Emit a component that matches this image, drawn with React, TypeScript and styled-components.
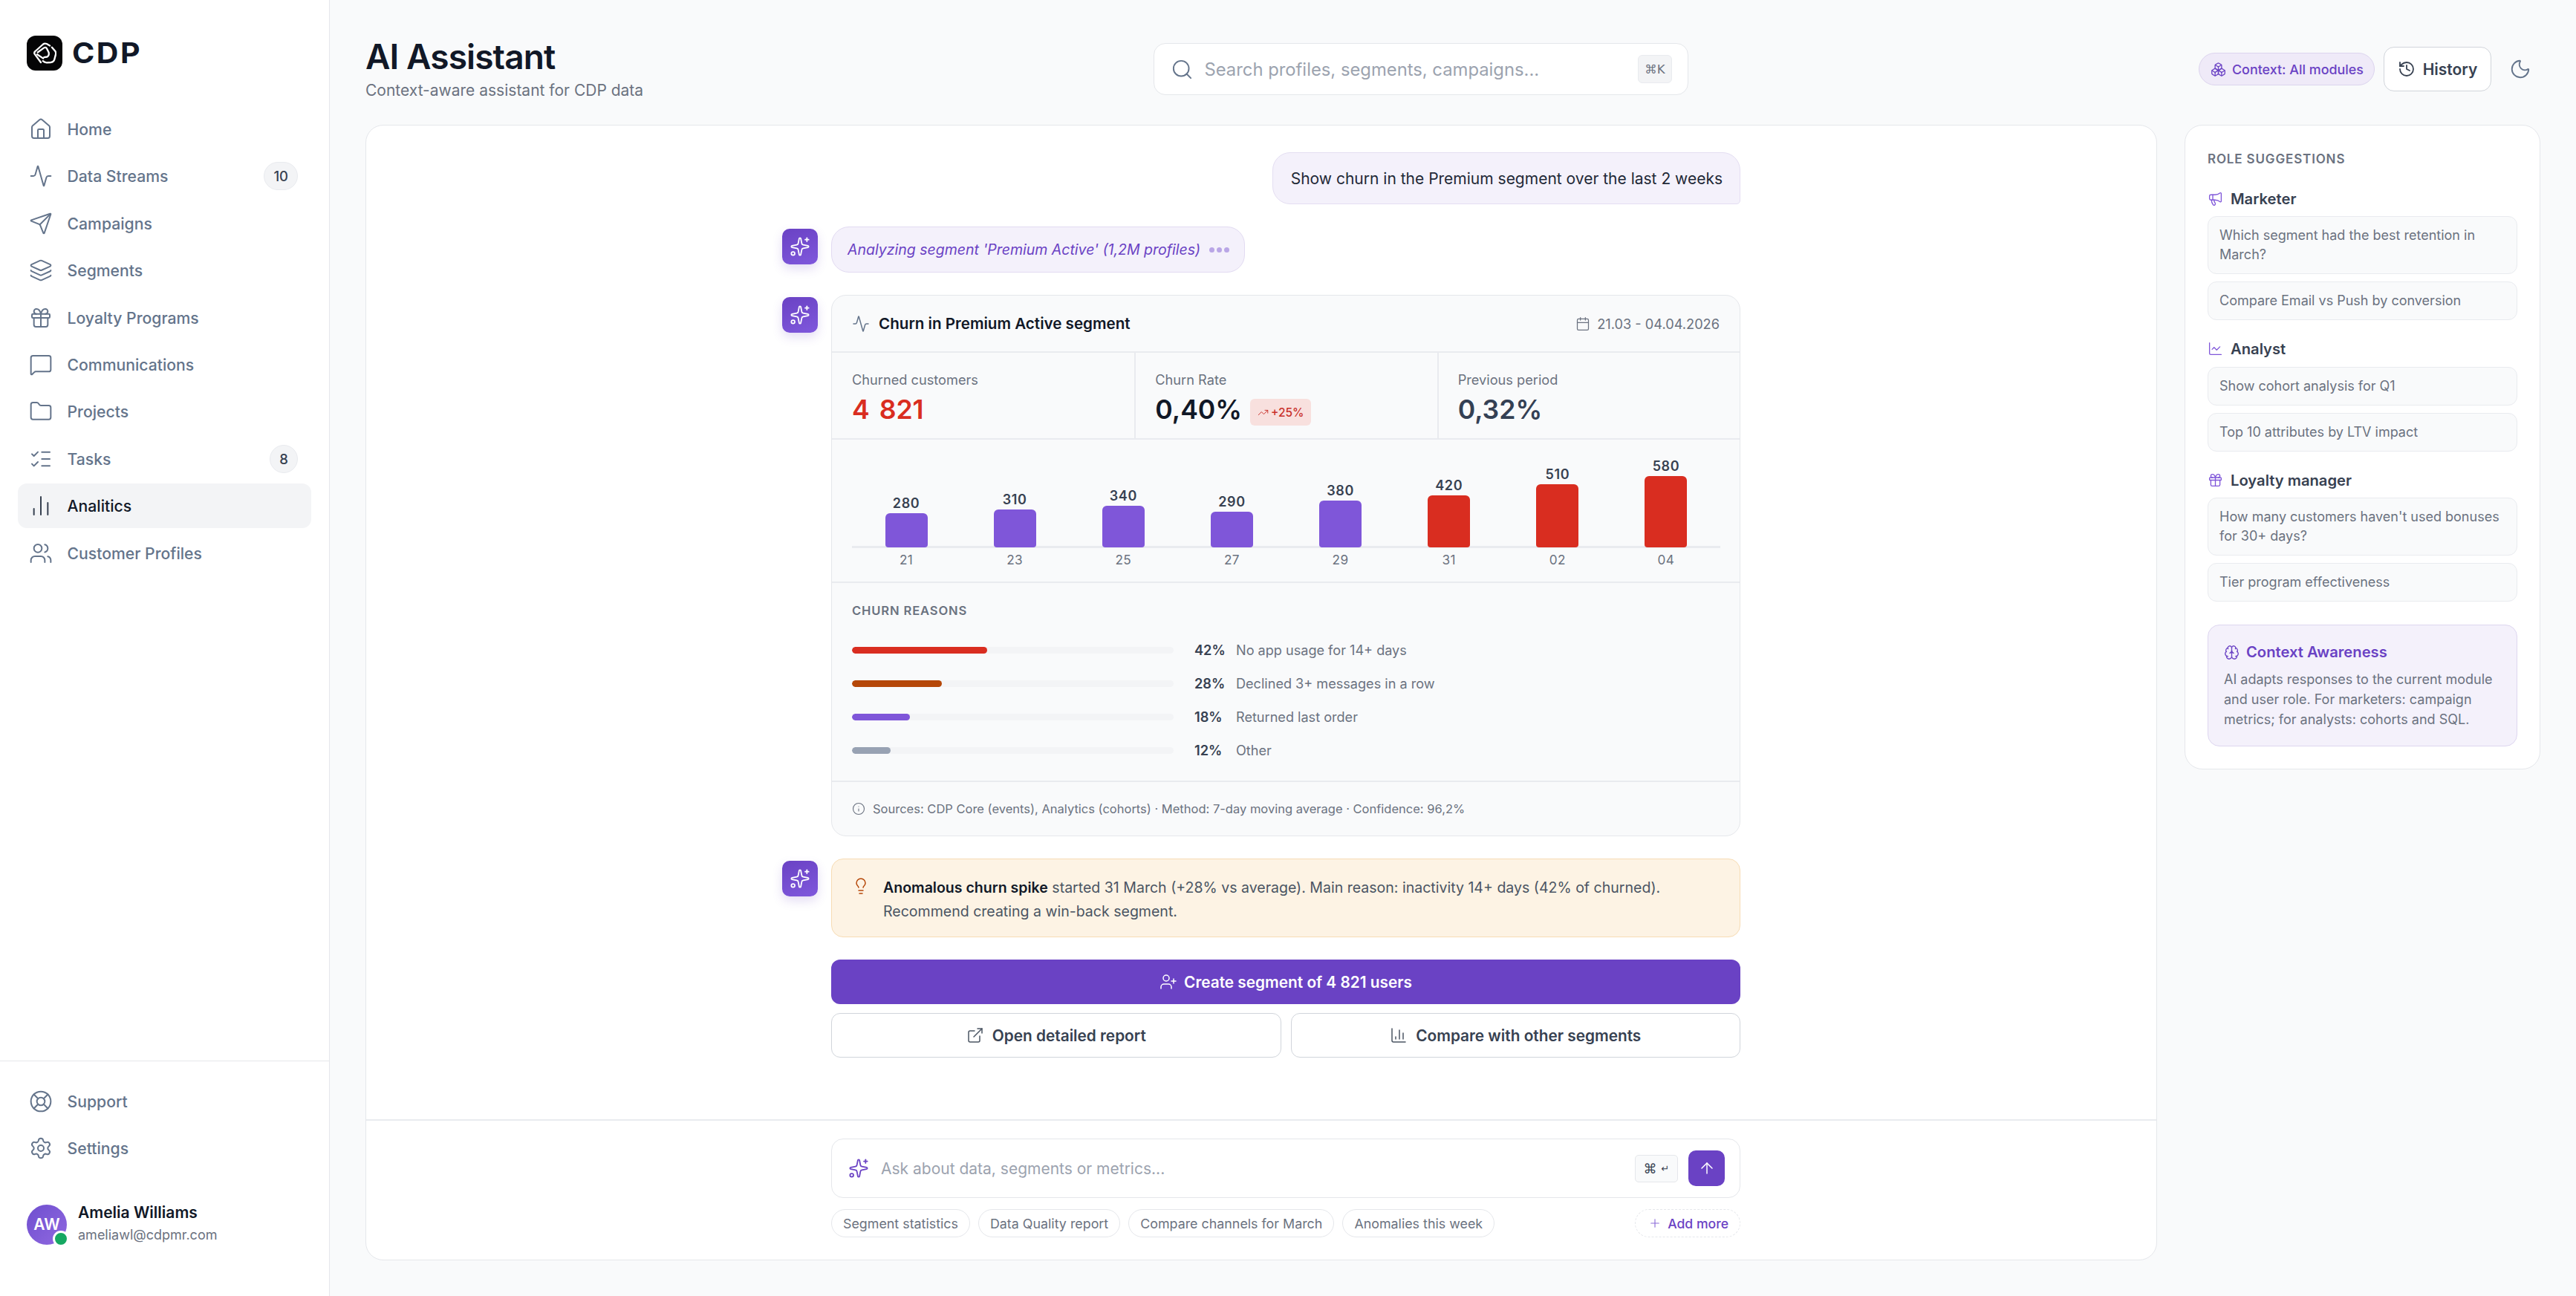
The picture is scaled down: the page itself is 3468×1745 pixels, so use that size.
import React from "react";
import styled, { createGlobalStyle } from "styled-components";
import {
  House, Activity, Send, Layers, Gift, MessageSquare, Folder, ListChecks, ChartNoAxesColumn, Users,
  LifeBuoy, Settings, Search, Boxes, History, Moon, Megaphone, ChartLine, Brain, Sparkles, Calendar,
  Info, Lightbulb, UserPlus, ExternalLink, ChartColumn, TrendingUp, ArrowUp, Plus,
} from "lucide-react";

const Global = createGlobalStyle`
  html, body { margin: 0; padding: 0; background: #f9fafb; }
  body { font-family: Inter, "Noto Sans", "Liberation Sans", sans-serif; color: #111827; overflow: hidden; }
  * { box-sizing: border-box; }
`;

const Page = styled.div`display: flex; width: 100%; height: 1745px;`;

const Side = styled.aside`
  width: 444px; flex: none; background: #fff; border-right: 1px solid #e5e7eb;
  display: flex; flex-direction: column;
`;
const Brand = styled.div`display: flex; gap: 13px; padding: 48px 0 0 36px; height: 144px; align-items: flex-start;`;
const BrandMark = styled.div`width: 48px; height: 47px; border-radius: 12px; background: #050506; display: flex; align-items: center; justify-content: center;`;
const BrandName = styled.span`font-size: 38px; font-weight: 700; line-height: 47px; letter-spacing: 2.3px; color: #111827; display: inline-block; transform-origin: left; transform: scaleX(1.08);`;
const Nav = styled.nav`display: flex; flex-direction: column; gap: 3.4px; padding: 0 24px;`;
const NavItem = styled.div<{ $active?: boolean }>`
  display: flex; align-items: center; height: 60px; padding: 0 18px 0 15px; gap: 19.5px; border-radius: 12px;
  font-size: 21.2px; font-weight: 500;
  color: ${(p) => (p.$active ? "#111827" : "#64748b")};
  background: ${(p) => (p.$active ? "#f3f4f6" : "transparent")};
  svg { flex: none; color: ${(p) => (p.$active ? "#374151" : "#64748b")}; }
`;
const NavBadge = styled.span`
  margin-left: auto; min-width: 37px; height: 38px; padding: 0 12px; border-radius: 19px; background: #f3f4f6;
  border: 1px solid #e9ebef; font-size: 18.5px; font-weight: 500; color: #374151;
  display: flex; align-items: center; justify-content: center;
`;
const Spacer = styled.div`flex: 1;`;
const SideFoot = styled.div`border-top: 1px solid #e5e7eb; padding-top: 24px;`;
const UserRow = styled.div`display: flex; align-items: center; gap: 15px; padding: 45px 0 69px 36px;`;
const Avatar = styled.div`
  position: relative; width: 54px; height: 54px; border-radius: 50%;
  background: linear-gradient(135deg, #6f4fcf, #9068e0); color: #fff;
  font-size: 21px; font-weight: 600; display: flex; align-items: center; justify-content: center;
`;
const Online = styled.span`
  position: absolute; right: -3px; bottom: -3px; width: 22px; height: 22px; border-radius: 50%;
  background: #16a862; border: 3.5px solid #fff;
`;
const UserText = styled.div`display: flex; flex-direction: column; gap: 3px; margin-top: -2px;`;
const UserName = styled.span`font-size: 21px; font-weight: 600; line-height: 28px; color: #111827;`;
const UserMail = styled.span`font-size: 18px; line-height: 26px; color: #6b7280;`;

const Main = styled.main`flex: 1; min-width: 0; display: flex; flex-direction: column; padding: 0 48px 48px;`;
const Header = styled.header`height: 168px; padding-top: 18px; flex: none; display: flex; align-items: center; justify-content: space-between;`;
const TitleBlock = styled.div`width: 373px;`;
const Title = styled.h1`margin: 0; font-size: 46px; line-height: 52px; font-weight: 600; letter-spacing: -0.9px; color: #111827;`;
const Subtitle = styled.p`margin: 5px 0 0; font-size: 21px; line-height: 30px; color: #6b7280; white-space: nowrap;`;
const SearchBox = styled.div`
  width: 720px; height: 70px; border-radius: 16px; background: #fff; border: 1px solid #e5e7eb;
  display: flex; align-items: center; padding: 0 21px 0 22px; gap: 15px; color: #64748b;
`;
const SearchText = styled.span`flex: 1; font-size: 23.8px; color: #9ca3af;`;
const KeyHint = styled.span`
  height: 38px; padding: 0 8px; border-radius: 6px; background: #f3f4f6; border: 1px solid #e9ebef;
  display: flex; align-items: center; justify-content: center; gap: 1px;
  font-size: 16.5px; color: #6b7280; font-family: "DejaVu Sans", sans-serif;
`;
const HeadRight = styled.div`display: flex; align-items: center; width: 460px;`;
const ContextPill = styled.div`
  height: 44px; width: 237px; border-radius: 22px; background: #efeaf8; border: 1px solid #dcd4ee; color: #6a42c4;
  font-size: 17.9px; font-weight: 500; display: flex; align-items: center; gap: 8px; padding-left: 15px; white-space: nowrap;
`;
const HistoryBtn = styled.button`
  margin-left: 12px; width: 145px; height: 60px; border-radius: 14px; background: #fff; border: 1px solid #d1d5db;
  font: 600 21px Inter, sans-serif; color: #374151; display: flex; align-items: center; justify-content: center; gap: 10px; padding: 0;
  svg { color: #374151; }
`;
const ThemeBtn = styled.div`margin-left: 20px; width: 38px; display: flex; justify-content: center; color: #64748b;`;

const Body = styled.div`flex: 1; display: flex; gap: 37px; min-height: 0; align-items: stretch;`;
const ChatCard = styled.section`
  flex: 1; min-width: 0; background: #fff; border: 1px solid #e5e7eb; border-radius: 24px;
  display: flex; flex-direction: column;
`;
const Thread = styled.div`flex: 1; width: 1290px; margin: 0 auto; padding-top: 36px; display: flex; flex-direction: column; gap: 30px;`;
const UserBubble = styled.div`
  align-self: flex-end; height: 70px; padding: 0 23px 0 24px; display: flex; align-items: center;
  background: #f4f1fb; border: 1px solid #e4def2; border-radius: 24px 24px 5px 24px;
  font-size: 21px; color: #1f2937; white-space: nowrap;
`;
const Row = styled.div`display: flex; align-items: flex-start; gap: 18px;`;
const BotAvatar = styled.div`
  flex: none; width: 48px; height: 48px; margin-top: 3px; border-radius: 10px; color: #fff;
  background: linear-gradient(160deg, #6a42c4, #7f58dc); box-shadow: 0 6px 14px rgba(106, 66, 196, .18);
  display: flex; align-items: center; justify-content: center;
`;
const ThinkBubble = styled.div`
  height: 62px; padding: 0 20px 0 21px; display: flex; align-items: center; gap: 12px;
  background: #f4f1fb; border: 1px solid #e2dbf2; border-radius: 24px;
  font-size: 19.5px; font-style: italic; color: #6a42c4; white-space: nowrap;
`;
const Dots = styled.span`display: flex; gap: 3px;`;
const Dot = styled.i`width: 7px; height: 7px; border-radius: 50%; background: #b9a6e6;`;
const Report = styled.div`flex: 1; min-width: 0; background: #f9fafb; border: 1px solid #e5e7eb; border-radius: 20px; overflow: hidden;`;
const ReportHead = styled.div`height: 77px; border-bottom: 2px solid #e9ebef; padding: 0 27px; display: flex; align-items: center;`;
const ReportTitle = styled.h3`margin: 0; font-size: 20.6px; font-weight: 600; color: #111827; display: flex; align-items: center; gap: 12px; svg { color: #64748b; }`;
const DateRange = styled.span`margin-left: auto; font-size: 18.2px; color: #6b7280; display: flex; align-items: center; gap: 9px;`;
const Stats = styled.div`display: grid; grid-template-columns: repeat(3, 1fr); height: 117px; border-bottom: 2px solid #e9ebef;`;
const Stat = styled.div`padding: 24px 0 0 27px; & + & { border-left: 2px solid #e9ebef; padding-left: 26px; }`;
const StatLabel = styled.div`font-size: 18.2px; line-height: 24px; color: #6b7280;`;
const StatLine = styled.div`display: flex; align-items: center; gap: 11px; margin-top: 6px; height: 46px;`;
const StatValue = styled.span<{ $tone: string }>`font-size: 35.6px; font-weight: 600; line-height: 46px; word-spacing: 4px; color: ${(p) => p.$tone};`;
const Delta = styled.span`
  height: 36px; padding: 0 10px; margin-top: 6px; border-radius: 6px; background: #f8e0de; color: #c9302a;
  font-size: 15.5px; font-weight: 500; display: flex; align-items: center; gap: 3px;
`;
const Chart = styled.div`height: 193px; padding: 22px 26px 0 27px; border-bottom: 2px solid #e9ebef;`;
const Plot = styled.div`height: 124px; display: grid; grid-template-columns: repeat(8, 1fr); align-items: end; border-bottom: 3px solid #e9ebef;`;
const BarCol = styled.div`display: flex; flex-direction: column; align-items: center;`;
const BarValue = styled.span`font-size: 18px; line-height: 22px; font-weight: 600; letter-spacing: .6px; color: #374151; margin-bottom: 2px;`;
const Bar = styled.div<{ $h: number; $hot?: boolean }>`
  width: 57px; height: ${(p) => p.$h}px; border-radius: 6px 6px 4px 4px; margin-bottom: -2px;
  background: ${(p) => (p.$hot ? "#d92d20" : "#7f56d9")};
`;
const Axis = styled.div`display: grid; grid-template-columns: repeat(8, 1fr); margin-top: 4px;`;
const Tick = styled.span`text-align: center; font-size: 17.2px; letter-spacing: .4px; line-height: 24px; color: #6b7280;`;
const Reasons = styled.div`height: 268px; padding: 26px 26px 0 27px; border-bottom: 2px solid #e9ebef;`;
const Eyebrow = styled.h4`margin: 0; font-size: 16.6px; line-height: 22px; font-weight: 600; letter-spacing: .85px; color: #6b7280; text-transform: uppercase;`;
const ReasonList = styled.div`display: flex; flex-direction: column; gap: 19px; margin-top: 29px;`;
const Reason = styled.div`height: 26px; display: flex; align-items: center;`;
const Track = styled.div`width: 433px; height: 9px; border-radius: 5px; background: #f3f4f6; overflow: hidden;`;
const Fill = styled.div<{ $c: string }>`height: 100%; border-radius: 5px; background: ${(p) => p.$c};`;
const Pct = styled.span`width: 41px; margin-left: 28px; font-size: 18.2px; font-weight: 600; color: #374151;`;
const ReasonText = styled.span`margin-left: 15px; font-size: 18.1px; color: #6b7280;`;
const ReportFoot = styled.div`height: 72px; padding: 0 26px 0 27px; display: flex; align-items: center; gap: 10px; font-size: 16.5px; color: #6b7280; svg { color: #6b7280; flex: none; }`;
const Insight = styled.div`
  flex: 1; min-width: 0; height: 106px; background: #fdf3e4; border: 1px solid #f7dcb4; border-radius: 16px;
  display: flex; gap: 18px; padding: 22px 26px 0 27px; font-size: 19.55px; line-height: 32px; color: #4b5563;
  svg { flex: none; color: #b54708; margin-top: 2px; }
  b { font-weight: 600; color: #111827; }
`;
const Actions = styled.div`display: flex; flex-direction: column; gap: 12px; margin-left: 66px;`;
const PrimaryBtn = styled.button`
  height: 60px; border: 0; border-radius: 12px; background: #6a42c4; color: #fff; font: 600 20.8px Inter, sans-serif;
  display: flex; align-items: center; justify-content: center; gap: 9px;
`;
const ActionRow = styled.div`display: grid; grid-template-columns: 1fr 1fr; gap: 13px;`;
const GhostBtn = styled.button`
  height: 60px; background: #fff; border: 1px solid #d1d5db; border-radius: 12px; color: #374151; font: 600 20.8px Inter, sans-serif;
  display: flex; align-items: center; justify-content: center; gap: 11px; svg { color: #4b5563; }
`;
const Composer = styled.div`flex: none; height: 189px; border-top: 2px solid #e9ebef; padding-top: 24px;`;
const ComposerInner = styled.div`width: 1290px; margin: 0 auto; padding-left: 66px;`;
const InputBox = styled.div`
  height: 80px; border: 1px solid #e5e7eb; border-radius: 16px; background: #fff;
  display: flex; align-items: center; padding: 0 20px 0 22px; color: #6a42c4;
`;
const InputText = styled.span`flex: 1; margin-left: 16px; font-size: 21px; color: #9ca3af;`;
const EnterKey = styled.span`
  width: 58px; height: 37px; border-radius: 5px; background: #f9fafb; border: 1px solid #e5e7eb;
  font: 18px "DejaVu Sans", sans-serif; color: #374151; display: flex; align-items: center; justify-content: center; gap: 6px;
  small { font-size: 13px; }
`;
const SendBtn = styled.button`
  width: 49px; height: 48px; margin-left: 14px; border: 0; border-radius: 10px; background: #6a42c4; color: #fff; padding: 0;
  display: flex; align-items: center; justify-content: center;
`;
const Chips = styled.div`display: flex; gap: 11px; margin-top: 15px;`;
const Chip = styled.span`
  height: 38px; padding: 0 15px; border-radius: 19px; border: 1px solid #e5e7eb; background: #fff;
  display: flex; align-items: center; font-size: 17.85px; color: #6b7280; white-space: nowrap;
`;
const AddChip = styled(Chip)`
  margin-left: auto; border: 1px dashed #e5e7eb; color: #6a42c4; gap: 8px; padding: 0 15px 0 17px;
  font-size: 17.6px; font-weight: 500; svg { color: #8b6bd8; }
`;

const Rail = styled.aside`
  flex: none; width: 479px; align-self: flex-start; background: #fff; border: 1px solid #e5e7eb; border-radius: 24px; padding: 33px 30px 30px;
`;
const RailTitle = styled.h4`margin: 0; font-size: 17px; line-height: 24px; font-weight: 600; letter-spacing: .85px; color: #6b7280; text-transform: uppercase;`;
const RoleHead = styled.div<{ $first?: boolean }>`
  display: flex; align-items: center; gap: 9px; height: 28px; margin-top: ${(p) => (p.$first ? 27 : 24.5)}px; padding-left: 0;
  font-size: 20.2px; font-weight: 600; color: #374151; svg { color: #7f56d9; margin-right: 1px; }
`;
const Tips = styled.div`display: flex; flex-direction: column; gap: 10px; margin-top: 10px;`;
const Tip = styled.div`
  min-height: 51px; padding: 12px 15px; border-radius: 12px; background: #f9fafb; border: 1px solid #e9ebef;
  font-size: 18px; line-height: 26px; color: #6b7280;
`;
const AwareBox = styled.div`
  margin-top: 31px; height: 164px; border-radius: 16px; background: #f4f1fb; border: 1px solid #ddd6ef; padding: 22px 21px 0;
`;
const AwareTitle = styled.div`display: flex; align-items: center; gap: 9px; font-size: 20.2px; line-height: 28px; font-weight: 600; color: #6a42c4;`;
const AwareText = styled.p`margin: 9px 0 0; font-size: 18px; line-height: 27px; color: #6b7280;`;

const thin = { strokeWidth: 1.5 };

const LogoGlyph = () => (
  <svg width="31" height="29" viewBox="0 0 87 80" fill="none" stroke="#fff" strokeWidth="6.5" strokeLinecap="round" strokeLinejoin="round">
    <path d="M28 75 5 44Q1 38 7 33L36 7Q42 2 50 5L62 12" />
    <path d="M16 37 40 20Q46 16 50 22L58 38Q60 50 52 54L40 56" />
    <path d="M70 18 82 32Q86 38 84 46L79 65Q76 74 66 75L50 76Q42 76 36 70" />
    <path d="M14 45 37 60" />
  </svg>
);

const primaryNav = [
  { label: "Home", Icon: House },
  { label: "Data Streams", Icon: Activity, badge: "10" },
  { label: "Campaigns", Icon: Send },
  { label: "Segments", Icon: Layers },
  { label: "Loyalty Programs", Icon: Gift },
  { label: "Communications", Icon: MessageSquare },
  { label: "Projects", Icon: Folder },
  { label: "Tasks", Icon: ListChecks, badge: "8" },
  { label: "Analitics", Icon: ChartNoAxesColumn, active: true },
  { label: "Customer Profiles", Icon: Users },
];
const bars = [
  ["280", "21", 46], ["310", "23", 51], ["340", "25", 56], ["290", "27", 48],
  ["380", "29", 63], ["420", "31", 70, true], ["510", "02", 85, true], ["580", "04", 96, true],
] as const;
const reasons = [
  { pct: 42, text: "No app usage for 14+ days", c: "#d92d20" },
  { pct: 28, text: "Declined 3+ messages in a row", c: "#b54708" },
  { pct: 18, text: "Returned last order", c: "#7f56d9" },
  { pct: 12, text: "Other", c: "#98a2b3" },
];
const roles = [
  { name: "Marketer", Icon: Megaphone, tips: ["Which segment had the best retention in March?", "Compare Email vs Push by conversion"] },
  { name: "Analyst", Icon: ChartLine, tips: ["Show cohort analysis for Q1", "Top 10 attributes by LTV impact"] },
  { name: "Loyalty manager", Icon: Gift, tips: ["How many customers haven't used bonuses for 30+ days?", "Tier program effectiveness"] },
];
const chips = ["Segment statistics", "Data Quality report", "Compare channels for March", "Anomalies this week"];

const Bot = () => (
  <BotAvatar><Sparkles size={28} {...thin} /></BotAvatar>
);

export default function App() {
  return (
    <Page>
      <Global />
      <Side>
        <Brand>
          <BrandMark><LogoGlyph /></BrandMark>
          <BrandName>CDP</BrandName>
        </Brand>
        <Nav>
          {primaryNav.map(({ label, Icon, badge, active }) => (
            <NavItem key={label} $active={active}>
              <Icon size={32} {...thin} />
              {label}
              {badge && <NavBadge>{badge}</NavBadge>}
            </NavItem>
          ))}
        </Nav>
        <Spacer />
        <SideFoot>
          <Nav>
            <NavItem><LifeBuoy size={32} {...thin} />Support</NavItem>
            <NavItem><Settings size={32} {...thin} />Settings</NavItem>
          </Nav>
          <UserRow>
            <Avatar>AW<Online /></Avatar>
            <UserText>
              <UserName>Amelia Williams</UserName>
              <UserMail>ameliawl@cdpmr.com</UserMail>
            </UserText>
          </UserRow>
        </SideFoot>
      </Side>

      <Main>
        <Header>
          <TitleBlock>
            <Title>AI Assistant</Title>
            <Subtitle>Context-aware assistant for CDP data</Subtitle>
          </TitleBlock>
          <SearchBox>
            <Search size={31} {...thin} />
            <SearchText>Search profiles, segments, campaigns...</SearchText>
            <KeyHint>⌘K</KeyHint>
          </SearchBox>
          <HeadRight>
            <ContextPill><Boxes size={21} {...thin} />Context: All modules</ContextPill>
            <HistoryBtn><History size={24} strokeWidth={1.8} />History</HistoryBtn>
            <ThemeBtn><Moon size={30} {...thin} /></ThemeBtn>
          </HeadRight>
        </Header>

        <Body>
          <ChatCard>
            <Thread>
              <UserBubble>Show churn in the Premium segment over the last 2 weeks</UserBubble>
              <Row>
                <Bot />
                <ThinkBubble>
                  Analyzing segment 'Premium Active' (1,2M profiles)
                  <Dots><Dot /><Dot /><Dot /></Dots>
                </ThinkBubble>
              </Row>
              <Row>
                <Bot />
                <Report>
                  <ReportHead>
                    <ReportTitle><Activity size={24} {...thin} />Churn in Premium Active segment</ReportTitle>
                    <DateRange><Calendar size={20} {...thin} />21.03 - 04.04.2026</DateRange>
                  </ReportHead>
                  <Stats>
                    <Stat>
                      <StatLabel>Churned customers</StatLabel>
                      <StatLine><StatValue $tone="#d92d20">4 821</StatValue></StatLine>
                    </Stat>
                    <Stat>
                      <StatLabel>Churn Rate</StatLabel>
                      <StatLine>
                        <StatValue $tone="#111827">0,40%</StatValue>
                        <Delta><TrendingUp size={15} {...thin} />+25%</Delta>
                      </StatLine>
                    </Stat>
                    <Stat>
                      <StatLabel>Previous period</StatLabel>
                      <StatLine><StatValue $tone="#344054">0,32%</StatValue></StatLine>
                    </Stat>
                  </Stats>
                  <Chart>
                    <Plot>
                      {bars.map(([value, tick, h, hot]) => (
                        <BarCol key={tick}>
                          <BarValue>{value}</BarValue>
                          <Bar $h={h} $hot={hot} />
                        </BarCol>
                      ))}
                    </Plot>
                    <Axis>
                      {bars.map(([, tick]) => <Tick key={tick}>{tick}</Tick>)}
                    </Axis>
                  </Chart>
                  <Reasons>
                    <Eyebrow>Churn reasons</Eyebrow>
                    <ReasonList>
                      {reasons.map((r) => (
                        <Reason key={r.text}>
                          <Track><Fill $c={r.c} style={{ width: `${r.pct}%` }} /></Track>
                          <Pct>{r.pct}%</Pct>
                          <ReasonText>{r.text}</ReasonText>
                        </Reason>
                      ))}
                    </ReasonList>
                  </Reasons>
                  <ReportFoot>
                    <Info size={18} {...thin} />
                    Sources: CDP Core (events), Analytics (cohorts) · Method: 7-day moving average · Confidence: 96,2%
                  </ReportFoot>
                </Report>
              </Row>
              <Row>
                <Bot />
                <Insight>
                  <Lightbulb size={24} {...thin} />
                  <div>
                    <b>Anomalous churn spike</b> started 31 March (+28% vs average). Main reason: inactivity 14+ days (42% of churned).
                    <br />Recommend creating a win-back segment.
                  </div>
                </Insight>
              </Row>
              <Actions>
                <PrimaryBtn><UserPlus size={24} {...thin} />Create segment of 4 821 users</PrimaryBtn>
                <ActionRow>
                  <GhostBtn><ExternalLink size={24} {...thin} />Open detailed report</GhostBtn>
                  <GhostBtn><ChartColumn size={24} {...thin} />Compare with other segments</GhostBtn>
                </ActionRow>
              </Actions>
            </Thread>
            <Composer>
              <ComposerInner>
                <InputBox>
                  <Sparkles size={28} {...thin} />
                  <InputText>Ask about data, segments or metrics...</InputText>
                  <EnterKey>⌘<small>↵</small></EnterKey>
                  <SendBtn><ArrowUp size={24} {...thin} /></SendBtn>
                </InputBox>
                <Chips>
                  {chips.map((c) => <Chip key={c}>{c}</Chip>)}
                  <AddChip><Plus size={18} {...thin} />Add more</AddChip>
                </Chips>
              </ComposerInner>
            </Composer>
          </ChatCard>

          <Rail>
            <RailTitle>Role suggestions</RailTitle>
            {roles.map(({ name, Icon, tips }, i) => (
              <React.Fragment key={name}>
                <RoleHead $first={i === 0}><Icon size={21} {...thin} />{name}</RoleHead>
                <Tips>
                  {tips.map((t) => <Tip key={t}>{t}</Tip>)}
                </Tips>
              </React.Fragment>
            ))}
            <AwareBox>
              <AwareTitle><Brain size={21} {...thin} />Context Awareness</AwareTitle>
              <AwareText>AI adapts responses to the current module and user role. For marketers: campaign metrics; for analysts: cohorts and SQL.</AwareText>
            </AwareBox>
          </Rail>
        </Body>
      </Main>
    </Page>
  );
}
